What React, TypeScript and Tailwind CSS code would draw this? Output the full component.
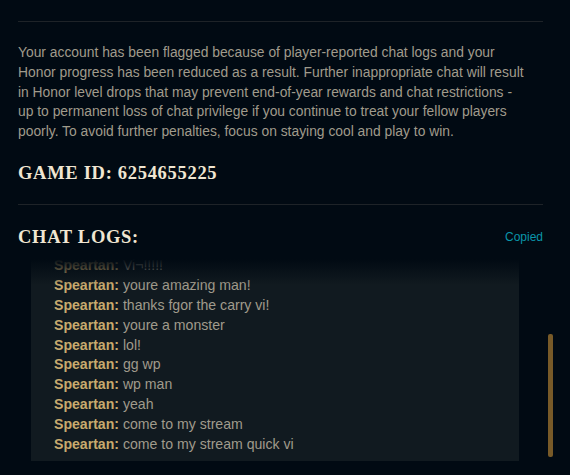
import React from "react";

const lines: string[] = [
  "Vi¬!!!!!",
  "youre amazing man!",
  "thanks fgor the carry vi!",
  "youre a monster",
  "lol!",
  "gg wp",
  "wp man",
  "yeah",
  "come to my stream",
  "come to my stream quick vi",
];

export default function App() {
  return (
    <div className="relative w-[570px] h-[475px] overflow-hidden bg-[#010a13] font-['Liberation_Sans',Arial,sans-serif]">
      <div className="px-[18px] pt-[21px] w-[561px]">
        <div className="border-t border-[#1e2328]" />
        <p className="mt-[21px] text-[13.85px] leading-[19.8px] text-[#a09b8c] whitespace-nowrap">
          Your account has been flagged because of player-reported chat logs and your
          <br />
          Honor progress has been reduced as a result. Further inappropriate chat will result
          <br />
          in Honor level drops that may prevent end-of-year rewards and chat restrictions -
          <br />
          up to permanent loss of chat privilege if you continue to treat your fellow players
          <br />
          poorly. To avoid further penalties, focus on staying cool and play to win.
        </p>
        <h2 className="mt-[20px] text-[18.5px] leading-[22px] font-bold tracking-[0.7px] text-[#f0e6d2] font-['Liberation_Serif',serif]">
          GAME ID: 6254655225
        </h2>
        <div className="mt-[20px] border-t border-[#1e2328]" />
        <div className="mt-[21px] flex items-center justify-between">
          <h2 className="text-[18.5px] leading-[22px] font-bold tracking-[0.7px] text-[#f0e6d2] font-['Liberation_Serif',serif]">
            CHAT LOGS:
          </h2>
          <span className="text-[12px] leading-[16px] text-[#0a96aa]">Copied</span>
        </div>
      </div>
      <div className="relative ml-[31px] mt-[11px] w-[488px] h-[202px] overflow-hidden bg-[#111a20]">
        <div className="flex h-full flex-col justify-end pl-[23px] pb-[6px]">
          {lines.map((m, i) => (
            <div key={i} className="whitespace-nowrap text-[14.1px] leading-[19.9px] text-[#a09b8c]">
              <span className="font-bold text-[#c8aa6e]">Speartan:</span> {m}
            </div>
          ))}
        </div>
        <div className="pointer-events-none absolute inset-x-0 top-0 h-[26px] bg-gradient-to-b from-[#010a13] to-[#010a13]/0" />
      </div>
      <div className="absolute left-[548px] top-[334px] w-[5px] h-[123px] rounded-[2px] bg-[#785a28]" />
    </div>
  );
}
